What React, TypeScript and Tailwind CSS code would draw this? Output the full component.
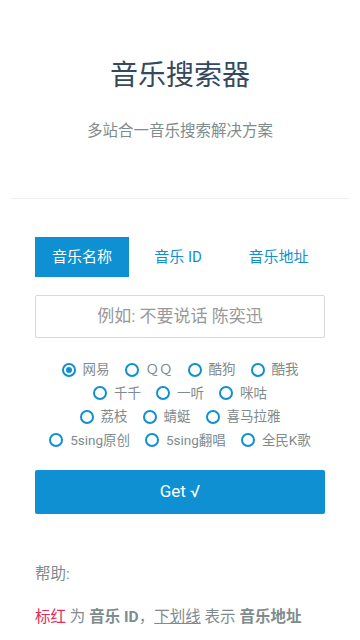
import React from "react";

const FONT = 'Roboto, "Noto Sans CJK SC", "Noto Sans", sans-serif';

function Radio({ label, checked }: { label: string; checked?: boolean }) {
  return (
    <span className="flex items-center">
      <span className="flex h-[14px] w-[14px] items-center justify-center rounded-full border-2 border-[#0e90d2] bg-white">
        {checked && <span className="h-[6px] w-[6px] rounded-full bg-[#0e90d2]" />}
      </span>
      <span className="ml-[7px] text-[13.5px] leading-[23.5px] text-[#7f8c8d]">{label}</span>
    </span>
  );
}

const rows: string[][] = [
  ["网易", "ＱＱ", "酷狗", "酷我"],
  ["千千", "一听", "咪咕"],
  ["荔枝", "蜻蜓", "喜马拉雅"],
  ["5sing原创", "5sing翻唱", "全民K歌"],
];

export default function App() {
  return (
    <div className="min-h-[640px] w-[360px] bg-white" style={{ fontFamily: FONT }}>
      <div className="px-[11px]">
        <div className="pt-[56px] text-center text-[28px] leading-[40px] text-[#34495e]">音乐搜索器</div>
        <div className="mt-[23px] text-center text-[15.5px] leading-[24px] text-[#7f8c8d]">多站合一音乐搜索解决方案</div>
        <div className="mt-[55px] h-[1px] bg-[#efefef]" />
      </div>
      <div className="px-[35px]">
        <div className="mt-[38px] flex h-[40px]">
          <div className="flex w-[94px] items-center justify-center bg-[#0e90d2] text-[15px] text-white">音乐名称</div>
          <div className="flex flex-1 items-center justify-center pr-[2px] text-[15px] text-[#0e90d2]">音乐 ID</div>
          <div className="flex w-[96px] items-center justify-center pl-[3px] text-[15px] text-[#0e90d2]">音乐地址</div>
        </div>
        <div className="mt-[18px] flex h-[43px] items-center justify-center rounded-[2px] border border-[#d9d9d9] text-[17px] text-[#999]">
          例如: 不要说话 陈奕迅
        </div>
        <div className="mt-[20px] flex flex-col">
          {rows.map((r, i) => (
            <div key={i} className="flex justify-center gap-[15px]">
              {r.map((l, j) => (
                <Radio key={l} label={l} checked={i === 0 && j === 0} />
              ))}
            </div>
          ))}
        </div>
        <div className="mt-[18px] flex h-[44px] items-center justify-center rounded-[2px] bg-[#0e90d2] text-[17px] text-white">
          Get √
        </div>
        <div className="mt-[48px] text-[15.5px] leading-[24px] text-[#7f8c8d]">帮助:</div>
        <div className="mt-[19px] text-[15.5px] leading-[24px] text-[#7f8c8d]">
          <span className="text-[#dd2e56]">标红</span> 为 <b>音乐 ID</b>，<span className="underline">下划线</span> 表示 <b>音乐地址</b>
        </div>
      </div>
    </div>
  );
}
